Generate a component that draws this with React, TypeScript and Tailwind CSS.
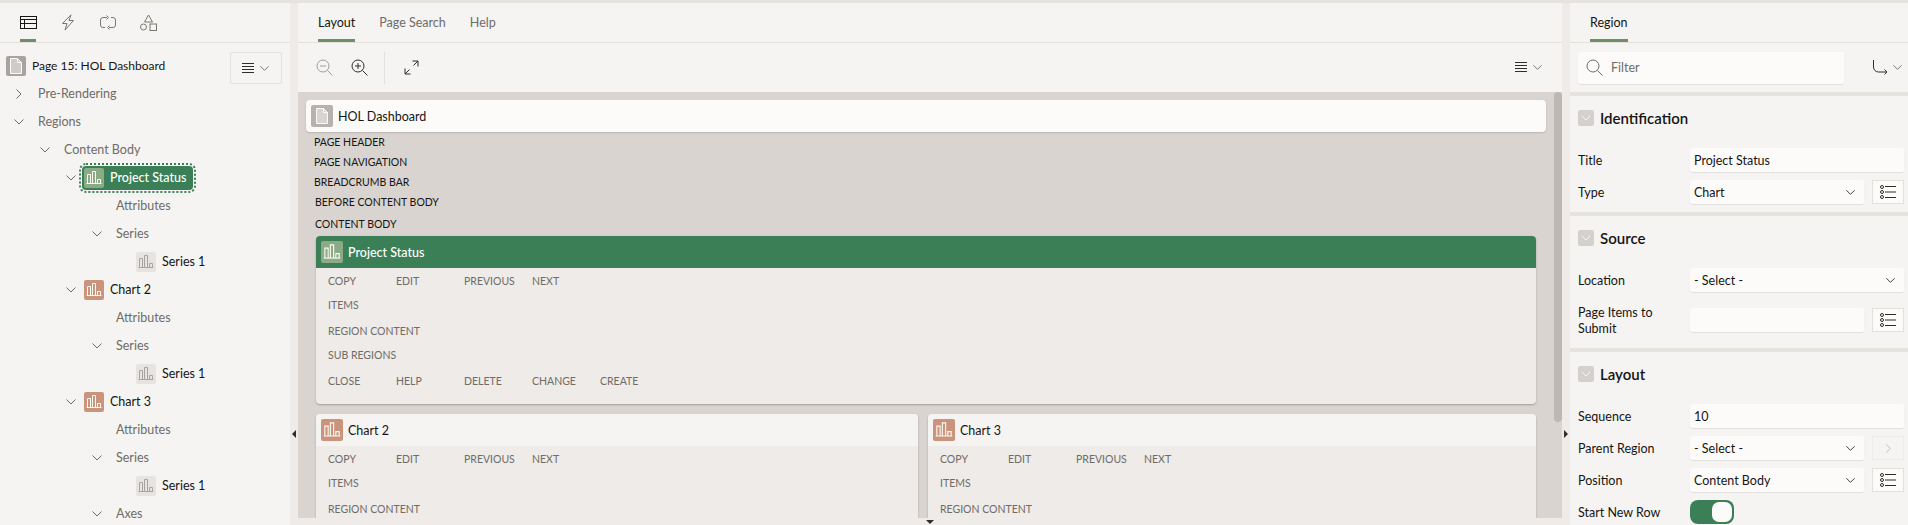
import React from "react";

const Bars = ({ color, size = 22 }: { color: string; size?: number }) => (
  <svg width={size} height={size} viewBox="0 0 20 20" fill="none" stroke={color} strokeWidth="1">
    <path d="M2.500 15.500h15" />
    <path d="M3.500 15.500v-9h3v9M8.500 15.500v-12h3v12M13.500 15.500v-4h3v4" />
  </svg>
);

const Chev = ({ size = 12, color = "#6f6b67", dir = "down" }: { size?: number; color?: string; dir?: "down" | "right" }) => (
  <svg width={size} height={size} viewBox="0 0 12 12" fill="none" stroke={color} strokeWidth="1">
    {dir === "down" ? <path d="M1.500 3.500 6 8l4.500-4.500" /> : <path d="M3.500 1.500 8 6l-4.500 4.500" />}
  </svg>
);

const PageIcon = ({ size = 22, bg }: { size?: number; bg: string }) => (
  <span className="flex shrink-0 items-center justify-center rounded-[2px]" style={{ width: size, height: size, background: bg }}>
    <svg width="16" height="18" viewBox="0 0 16 18" fill="none" stroke="#fcfbfa" strokeWidth="1">
      <path d="M2.500 1.500h7l4 4v11h-11z" fill="rgba(255,255,255,0.45)" />
      <path d="M9.500 1.500v4h4" />
    </svg>
  </span>
);

const Menu = ({ w = 12 }: { w?: number }) => (
  <svg width={w} height="11" viewBox="0 0 12 11" fill="none" stroke="#312d2a" strokeWidth="1">
    <path d="M0 .5h12M0 3.500h12M0 6.500h12M0 9.500h12" />
  </svg>
);

const ListIcon = () => (
  <svg width="16" height="14" viewBox="0 0 16 14" fill="none" stroke="#312d2a" strokeWidth="1">
    <circle cx="2" cy="2" r="1.500" />
    <circle cx="2" cy="7" r="1.500" />
    <circle cx="2" cy="12" r="1.500" />
    <path d="M5 1.500h11M5 7h11M5 12.500h11" />
  </svg>
);

type RowProps = { indent: string; chev?: "down" | "right"; chevClass?: string; children: React.ReactNode };

const Row = ({ indent, chev, chevClass = "-ml-[25px]", children }: RowProps) => (
  <div className={`relative flex h-7 items-center ${indent}`}>
    {chev && (
      <span className={`absolute flex ${chevClass}`}>
        <Chev dir={chev} />
      </span>
    )}
    {children}
  </div>
);

const Muted = ({ children }: { children: React.ReactNode }) => <span className="pt-px text-[#6f6b67]">{children}</span>;

const Series1 = () => (
  <Row indent="pl-[136px]">
    <span className="mr-[6px] flex h-5 w-5 items-center justify-center rounded-[2px] bg-[#e6e3e0]">
      <Bars color="#a8a5a1" size={20} />
    </span>
    <span className="pt-px text-[#161513]">Series 1</span>
  </Row>
);

const ChartNode = ({ label }: { label: string }) => (
  <Row indent="pl-[84px]" chev="down" chevClass="-ml-[19px]">
    <span className="mr-[6px] flex h-5 w-5 items-center justify-center rounded-[2px] bg-[#c9937c]">
      <Bars color="#fcfbf3" size={20} />
    </span>
    <span className="pt-px text-[#161513]">{label}</span>
  </Row>
);

const ChartChildren = () => (
  <>
    <Row indent="pl-[116px]">
      <Muted>Attributes</Muted>
    </Row>
    <Row indent="pl-[116px]" chev="down">
      <Muted>Series</Muted>
    </Row>
    <Series1 />
  </>
);

const TabBar = ({ children }: { children: React.ReactNode }) => (
  <div className="flex h-10 shrink-0 items-stretch border-b border-[#e4e1dd]">{children}</div>
);

const LeftPanel = () => (
  <aside className="flex w-[290px] shrink-0 flex-col bg-[#f5f4f2] text-[12.5px]">
    <TabBar>
      <div className="relative ml-[8px] flex w-10 items-center justify-center">
        <svg width="17" height="13" viewBox="0 0 17 13" fill="none" stroke="#161513" strokeWidth="1">
          <rect x="0.500" y="0.500" width="16" height="12" />
          <path d="M0.500 3.500h16M0.500 7.500h16M4.500 3.500v9" />
        </svg>
        <span className="absolute bottom-0 left-3 h-[3px] w-4 bg-[#6c8f6a]" />
      </div>
      <div className="flex w-10 items-center justify-center">
        <svg width="14" height="17" viewBox="0 0 14 17" fill="none" stroke="#7a7672" strokeWidth="1" strokeLinejoin="round">
          <path d="M10 .8 1.500 9.500h4.500l-2 6.500 8.500-9.500h-4.500z" />
        </svg>
      </div>
      <div className="flex w-10 items-center justify-center">
        <svg width="16" height="15" viewBox="0 0 16 15" fill="none" stroke="#7a7672" strokeWidth="1">
          <path d="M7 2.500H3A2.500 2.500 0 0 0 .5 5v5A2.500 2.500 0 0 0 3 12.500h2" />
          <path d="M6.500.5l2 2-2 2" />
          <path d="M9 12.500h4a2.500 2.500 0 0 0 2.500-2.500V5A2.500 2.500 0 0 0 13 2.500h-2" />
          <path d="M9.500 10.500l-2 2 2 2" />
        </svg>
      </div>
      <div className="flex w-10 items-center justify-center">
        <svg width="17" height="17" viewBox="0 0 17 17" fill="none" stroke="#7a7672" strokeWidth="1">
          <path d="M8.500 1 4.500 8h8z" />
          <circle cx="3.500" cy="13" r="3" />
          <rect x="10" y="10" width="6.500" height="6.500" />
        </svg>
      </div>
    </TabBar>
    <div className="flex h-[37px] items-center pt-[8px] pr-[8px] pl-[6px]">
      <PageIcon bg="#a8a39c" size={20} />
      <span className="ml-[6px] flex-1 text-[12px] font-normal text-[#161513]">Page 15: HOL Dashboard</span>
      <button className="mt-[5px] flex h-8 w-[52px] items-center justify-center gap-[5px] rounded-[2px] border border-[#e4e1dd]">
        <Menu />
        <Chev size={11} />
      </button>
    </div>
    <div className="flex-1 overflow-hidden">
      <Row indent="pl-[38px]" chev="right">
        <Muted>Pre-Rendering</Muted>
      </Row>
      <Row indent="pl-[38px]" chev="down">
        <Muted>Regions</Muted>
      </Row>
      <Row indent="pl-[64px]" chev="down">
        <Muted>Content Body</Muted>
      </Row>
      <Row indent="pl-[82px]" chev="down" chevClass="-ml-[17px]">
        <span className="flex h-6 w-[111px] items-center rounded-[4px] bg-[#3b7f56] pl-[2px] text-white outline-2 outline-offset-1 outline-[#3b7f56] outline-dotted">
          <span className="mr-[6px] flex h-5 w-5 items-center justify-center rounded-[2px] bg-[#8aab86]">
            <Bars color="#fcfbf3" size={20} />
          </span>
          <span className="pt-px font-medium">Project Status</span>
        </span>
      </Row>
      <ChartChildren />
      <ChartNode label="Chart 2" />
      <ChartChildren />
      <ChartNode label="Chart 3" />
      <ChartChildren />
      <Row indent="pl-[116px]" chev="down">
        <Muted>Axes</Muted>
      </Row>
    </div>
  </aside>
);

const Gutter = ({ dir }: { dir: "left" | "right" }) => (
  <div className="relative w-2 shrink-0 bg-[#eeebe8]">
    <span
      className={`absolute top-[427px] left-[2px] h-0 w-0 border-y-[4px] border-y-transparent ${
        dir === "left" ? "border-r-[4px] border-r-[#312d2a]" : "border-l-[4px] border-l-[#312d2a]"
      }`}
    />
  </div>
);

const rowsTop = ["COPY", "EDIT", "PREVIOUS", "NEXT"];
const rowsBottom = ["CLOSE", "HELP", "DELETE", "CHANGE", "CREATE"];

const Cells = ({ items, className }: { items: string[]; className: string }) => (
  <div className={`flex h-6 items-center ${className}`}>
    {items.map((t) => (
      <span key={t} className="w-[68px]">
        {t}
      </span>
    ))}
  </div>
);

const RegionBox = ({ title, active, full, className }: { title: string; active?: boolean; full?: boolean; className: string }) => (
  <div className={`overflow-hidden rounded-[4px] bg-[#eeebe8] shadow-[0_1px_2px_rgba(0,0,0,0.25)] ${className}`}>
    <div className={`flex h-8 items-center pl-[5px] text-[12.5px] ${active ? "bg-[#3b7f56] font-medium text-white" : "bg-[#f5f4f2] text-[#161513]"}`}>
      <span className={`mr-[5px] flex h-[22px] w-[22px] items-center justify-center rounded-[2px] ${active ? "bg-[#8aab86]" : "bg-[#c9937c]"}`}>
        <Bars color="#fcfbf3" />
      </span>
      <span className="pt-[2px]">{title}</span>
    </div>
    <div className="px-3 pt-[2px] pb-[10px] text-[10.5px] text-[#6f6b67]">
      <Cells items={rowsTop} className="" />
      <Cells items={["ITEMS"]} className="" />
      <Cells items={["REGION CONTENT"]} className="mt-[2px] [&>span]:w-auto" />
      {full && (
        <>
          <Cells items={["SUB REGIONS"]} className="[&>span]:w-auto" />
          <Cells items={rowsBottom} className="mt-[2px]" />
        </>
      )}
    </div>
  </div>
);

const Middle = () => (
  <main className="flex min-w-0 flex-1 flex-col">
    <div className="bg-[#f5f4f2] text-[12.5px]">
      <TabBar>
        <div className="relative ml-5 flex items-center pt-[2px] text-[#161513]">
          Layout
          <span className="absolute right-0 bottom-0 left-0 h-[3px] bg-[#6c8f6a]" />
        </div>
        <div className="ml-6 flex items-center pt-[2px] text-[#6f6b67]">Page Search</div>
        <div className="ml-6 flex items-center pt-[2px] text-[#6f6b67]">Help</div>
      </TabBar>
      <div className="flex h-[49px] items-center">
        <svg className="ml-[18px]" width="17" height="17" viewBox="0 0 17 17" fill="none" stroke="#a09c98" strokeWidth="1">
          <circle cx="7" cy="7" r="6" />
          <path d="M11.500 11.500l5 5M4 7h6" />
        </svg>
        <svg className="ml-[18px]" width="17" height="17" viewBox="0 0 17 17" fill="none" stroke="#312d2a" strokeWidth="1">
          <circle cx="7" cy="7" r="6" />
          <path d="M11.500 11.500l5 5M4 7h6M7 4v6" />
        </svg>
        <span className="ml-[16px] h-8 w-px bg-[#e4e1dd]" />
        <svg className="ml-[19px]" width="15" height="15" viewBox="0 0 15 15" fill="none" stroke="#312d2a" strokeWidth="1">
          <path d="M1 14 5.500 9.500M9.500 5.500 14 1M8.500 1H14v5.500M1 8.500V14h5.500" />
        </svg>
        <div className="mr-[19px] ml-auto flex items-center gap-[5px]">
          <Menu />
          <Chev size={11} />
        </div>
      </div>
    </div>
    <div className="flex min-h-0 flex-1 overflow-hidden bg-[#d9d4d0]">
      <div className="min-w-0 flex-1 pt-2 pr-2 pl-2 text-[10.5px] text-[#161513]">
        <div className="flex h-8 items-center rounded-[4px] bg-[#fcfbfa] pl-[5px] text-[12.5px] shadow-[0_1px_2px_rgba(0,0,0,0.15)]">
          <PageIcon bg="#b5b2b0" />
          <span className="ml-[5px] pt-[2px]">HOL Dashboard</span>
        </div>
        <div className="pl-2">
          <div className="flex h-5 items-center pt-px">PAGE HEADER</div>
          <div className="flex h-5 items-center pt-px">PAGE NAVIGATION</div>
          <div className="flex h-5 items-center pt-px">BREADCRUMB BAR</div>
        </div>
        <div className="mx-[10px]">
          <div className="-ml-px flex h-[22px] items-center">BEFORE CONTENT BODY</div>
          <div className="-ml-px flex h-[22px] items-center">CONTENT BODY</div>
          <RegionBox title="Project Status" active full className="" />
          <div className="mt-[10px] flex gap-[10px]">
            <RegionBox title="Chart 2" className="w-[602px] shrink-0" />
            <RegionBox title="Chart 3" className="flex-1" />
          </div>
        </div>
      </div>
      <div className="w-2 shrink-0">
        <div className="h-[330px] rounded-[4px] bg-[#bdb8b4]" />
      </div>
    </div>
  </main>
);

const Label = ({ children }: { children: React.ReactNode }) => (
  <div className="w-[112px] shrink-0 pt-px text-[12.5px] leading-4 text-[#161513]">{children}</div>
);

const Field = ({ value, select, narrow }: { value?: string; select?: boolean; narrow?: boolean }) => (
  <div className={`flex h-6 items-center justify-between rounded-[2px] bg-[#fcfbfa] pr-2 pl-1 text-[12.5px] text-[#161513] shadow-[0_1px_1px_rgba(0,0,0,0.08)] ${narrow ? "w-[174px]" : "flex-1"}`}>
    <span className="pt-[2px]">{value}</span>
    {select && <Chev size={11} color="#312d2a" />}
  </div>
);

const SideButton = ({ disabled }: { disabled?: boolean }) => (
  <span className={`ml-2 flex h-6 w-8 items-center justify-center border ${disabled ? "border-[#eeebe8]" : "border-[#e4e1dd] bg-[#fcfbfa]"}`}>
    {disabled ? <Chev size={11} color="#bcb8b4" dir="right" /> : <ListIcon />}
  </span>
);

const FieldRow = ({ label, children, h = "h-8" }: { label: React.ReactNode; children: React.ReactNode; h?: string }) => (
  <div className={`flex items-center pr-1 pl-2 ${h}`}>
    <Label>{label}</Label>
    {children}
  </div>
);

const Section = ({ title, pad = "pb-1", children }: { title: string; pad?: string; children: React.ReactNode }) => (
  <section className={`border-t-4 border-[#e6e3df] ${pad}`}>
    <div className="flex items-center pt-[14px] pb-[18px] pl-2">
      <span className="mr-[6px] flex h-4 w-4 items-center justify-center rounded-[2px] bg-[#d4d1cc]">
        <Chev size={12} color="#f5f4f2" />
      </span>
      <span className="text-[15px] leading-4 font-semibold text-[#161513]">{title}</span>
    </div>
    {children}
  </section>
);

const RightPanel = () => (
  <aside className="flex w-[338px] shrink-0 flex-col overflow-hidden bg-[#f5f4f2]">
    <TabBar>
      <div className="relative ml-5 flex items-center pt-[2px] text-[12.5px] text-[#161513]">
        Region
        <span className="absolute right-0 bottom-0 left-0 h-[3px] bg-[#6c8f6a]" />
      </div>
    </TabBar>
    <div className="flex h-[49px] shrink-0 items-center pl-2">
      <div className="flex h-8 w-[266px] items-center rounded-[2px] bg-[#fcfbfa] pl-2 text-[12.5px] text-[#6f6b67] shadow-[0_1px_1px_rgba(0,0,0,0.08)]">
        <svg className="mr-2" width="17" height="17" viewBox="0 0 17 17" fill="none" stroke="#6f6b67" strokeWidth="1">
          <circle cx="7" cy="7" r="6" />
          <path d="M11.500 11.500l5 5" />
        </svg>
        <span className="pt-px">Filter</span>
      </div>
      <svg className="ml-[29px]" width="15" height="15" viewBox="0 0 15 15" fill="none" stroke="#312d2a" strokeWidth="1">
        <path d="M.5 0v7a5 5 0 0 0 5 5H14M11.500 9.500 14 12l-2.500 2.500" />
      </svg>
      <span className="ml-[4px] flex">
        <Chev size={11} />
      </span>
    </div>
    <Section title="Identification">
      <FieldRow label="Title">
        <Field value="Project Status" />
      </FieldRow>
      <FieldRow label="Type">
        <Field value="Chart" select narrow />
        <SideButton />
      </FieldRow>
    </Section>
    <Section title="Source" pad="pb-2">
      <FieldRow label="Location">
        <Field value="- Select -" select />
      </FieldRow>
      <FieldRow label={<>Page Items to<br />Submit</>} h="mt-1 h-10">
        <Field narrow />
        <SideButton />
      </FieldRow>
    </Section>
    <Section title="Layout">
      <FieldRow label="Sequence">
        <Field value="10" />
      </FieldRow>
      <FieldRow label="Parent Region">
        <Field value="- Select -" select narrow />
        <SideButton disabled />
      </FieldRow>
      <FieldRow label="Position">
        <Field value="Content Body" select narrow />
        <SideButton />
      </FieldRow>
      <FieldRow label="Start New Row">
        <span className="flex h-6 w-11 items-center justify-end rounded-[8px] bg-[#3b7f56] pr-[2px]">
          <span className="h-5 w-5 rounded-[7px] bg-[#fcfbfa]" />
        </span>
      </FieldRow>
    </Section>
  </aside>
);

export default function App() {
  return (
    <div className="flex h-[525px] w-[1908px] flex-col overflow-hidden bg-[#eeebe8] font-['Lato','Open_Sans',sans-serif]">
      <div className="flex min-h-0 flex-1 border-t-[3px] border-[#e6e3df]">
        <LeftPanel />
        <Gutter dir="left" />
        <div className="relative flex min-w-0 flex-1 flex-col">
          <div className="flex min-h-0 flex-1">
            <Middle />
          </div>
          <div className="relative h-[7px] shrink-0 bg-[#eeebe8]">
            <span className="absolute top-[2px] left-[628px] h-0 w-0 border-x-[4px] border-t-[4px] border-x-transparent border-t-[#312d2a]" />
          </div>
        </div>
        <Gutter dir="right" />
        <RightPanel />
      </div>
    </div>
  );
}
